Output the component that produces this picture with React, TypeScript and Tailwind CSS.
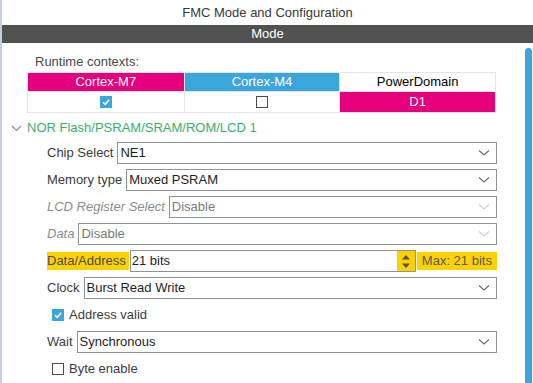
import React from "react";

const Chevron = ({ disabled }: { disabled?: boolean }) => (
  <svg width="12" height="8" viewBox="0 0 12 8" className="shrink-0">
    <path d="M1 1.5 L6 6 L11 1.5" fill="none" stroke={disabled ? "#cfd2d5" : "#6b6f73"} strokeWidth="1.2" />
  </svg>
);

const Check = ({ checked }: { checked: boolean }) =>
  checked ? (
    <span className="w-[12px] h-[12px] bg-[#3ba6dc] flex items-center justify-center shrink-0">
      <svg width="10" height="10" viewBox="0 0 10 10">
        <path d="M2 5.2 L4.2 7.3 L8.2 2.8" fill="none" stroke="#fff" strokeWidth="1.5" />
      </svg>
    </span>
  ) : (
    <span className="w-[12px] h-[12px] border border-[#4a4a4a] bg-white shrink-0" />
  );

const SelectRow = ({
  label,
  value,
  disabled,
}: {
  label: string;
  value: string;
  disabled?: boolean;
}) => (
  <div className="flex items-center h-[22px] mb-[5px]">
    <span className={disabled ? "italic text-[#8c8c8c] mr-[4px]" : "text-[#3c3c3c] mr-[4px]"}>{label}</span>
    <div className="flex-1 h-[22px] border border-[#8e9398] flex items-center pl-[2px] pr-[6px]">
      <span className={`flex-1 ${disabled ? "text-[#7a7a7a]" : "text-[#1e1e1e]"}`}>{value}</span>
      <Chevron disabled={disabled} />
    </div>
  </div>
);

export default function App() {
  return (
    <div
      className="flex w-[533px] h-[383px] overflow-hidden bg-white text-[13px] leading-[16px]"
      style={{ fontFamily: '"Liberation Sans", Arial, sans-serif' }}
    >
      <div className="w-[2px] bg-[#c7d0d8] shrink-0" />
      <div className="flex-1 flex flex-col">
        <div className="h-[25px] shrink-0 flex items-center justify-center text-[#3a3a3a]">FMC Mode and Configuration</div>
        <div className="h-[18px] shrink-0 bg-[#505250] text-white flex items-center justify-center">Mode</div>
        <div className="flex flex-1">
          {/* content */}
          <div className="flex-1 pr-[28px]">
            <div className="pl-[33px] pt-[11px] text-[#4a4a4a]">Runtime contexts:</div>
            <div className="ml-[25px] mt-[2px] mr-[1px] border border-[#e1e4e8]">
              <div className="grid grid-cols-3 h-[18px]">
                <div className="bg-[#e5007d] text-white flex items-center justify-center">Cortex-M7</div>
                <div className="bg-[#3ba6dc] text-white flex items-center justify-center border-l border-[#e1e4e8]">Cortex-M4</div>
                <div className="bg-white text-black flex items-center justify-center border-l border-[#e1e4e8]">PowerDomain</div>
              </div>
              <div className="grid grid-cols-3 h-[21px] border-t border-[#e1e4e8]">
                <div className="flex items-center justify-center">
                  <Check checked />
                </div>
                <div className="flex items-center justify-center border-l border-[#e1e4e8]">
                  <Check checked={false} />
                </div>
                <div className="bg-[#e5007d] text-white flex items-center justify-center border-l border-[#e1e4e8]">D1</div>
              </div>
            </div>

            <div className="flex items-center mt-[7px] h-[16px]">
              <div className="w-[25px] flex justify-center pl-[4px] pt-[1px]">
                <svg width="11" height="7" viewBox="0 0 11 7">
                  <path d="M1 1 L5.5 5.5 L10 1" fill="none" stroke="#8a8f94" strokeWidth="1.2" />
                </svg>
              </div>
              <span className="text-[#38b06c]">NOR Flash/PSRAM/SRAM/ROM/LCD 1</span>
            </div>

            <div className="pl-[45px] pt-[6px]">
              <SelectRow label="Chip Select" value="NE1" />
              <SelectRow label="Memory type" value="Muxed PSRAM" />
              <SelectRow label="LCD Register Select" value="Disable" disabled />
              <SelectRow label="Data" value="Disable" disabled />

              <div className="flex items-center h-[22px] mb-[5px]">
                <span className="bg-[#fcd200] text-[#4a4a4a] h-[18px] flex items-center pr-[3px]">Data/Address</span>
                <div className="w-[286px] h-[22px] border border-[#8e9398] flex items-center pl-[1px] ml-[1px]">
                  <span className="flex-1 text-[#1e1e1e]">21 bits</span>
                  <div className="w-[18px] h-full bg-[#fcd200] flex flex-col items-center justify-center gap-[3px]">
                    <svg width="10" height="6" viewBox="0 0 10 6">
                      <path d="M1 5.5 L5 1 L9 5.5 Z" fill="#555" />
                    </svg>
                    <svg width="10" height="6" viewBox="0 0 10 6">
                      <path d="M1 0.5 L5 5 L9 0.5 Z" fill="#555" />
                    </svg>
                  </div>
                </div>
                <span className="flex-1 ml-[1px] bg-[#fcd200] text-[#5a5a5a] h-[18px] flex items-center justify-center">
                  Max: 21 bits
                </span>
              </div>

              <SelectRow label="Clock" value="Burst Read Write" />

              <div className="flex items-center h-[22px] mb-[5px] pl-[5px] gap-[5px] text-[#3c3c3c]">
                <Check checked />
                <span>Address valid</span>
              </div>

              <SelectRow label="Wait" value="Synchronous" />

              <div className="flex items-center h-[22px] mb-[5px] pl-[5px] gap-[5px] text-[#3c3c3c]">
                <Check checked={false} />
                <span>Byte enable</span>
              </div>
            </div>
          </div>
          {/* scrollbar */}
          <div className="w-[7px] pt-[5px] mr-[1px] flex">
            <div className="flex-1 bg-[#3ba6dc] rounded-t-[4px]" />
          </div>
        </div>
      </div>
    </div>
  );
}
